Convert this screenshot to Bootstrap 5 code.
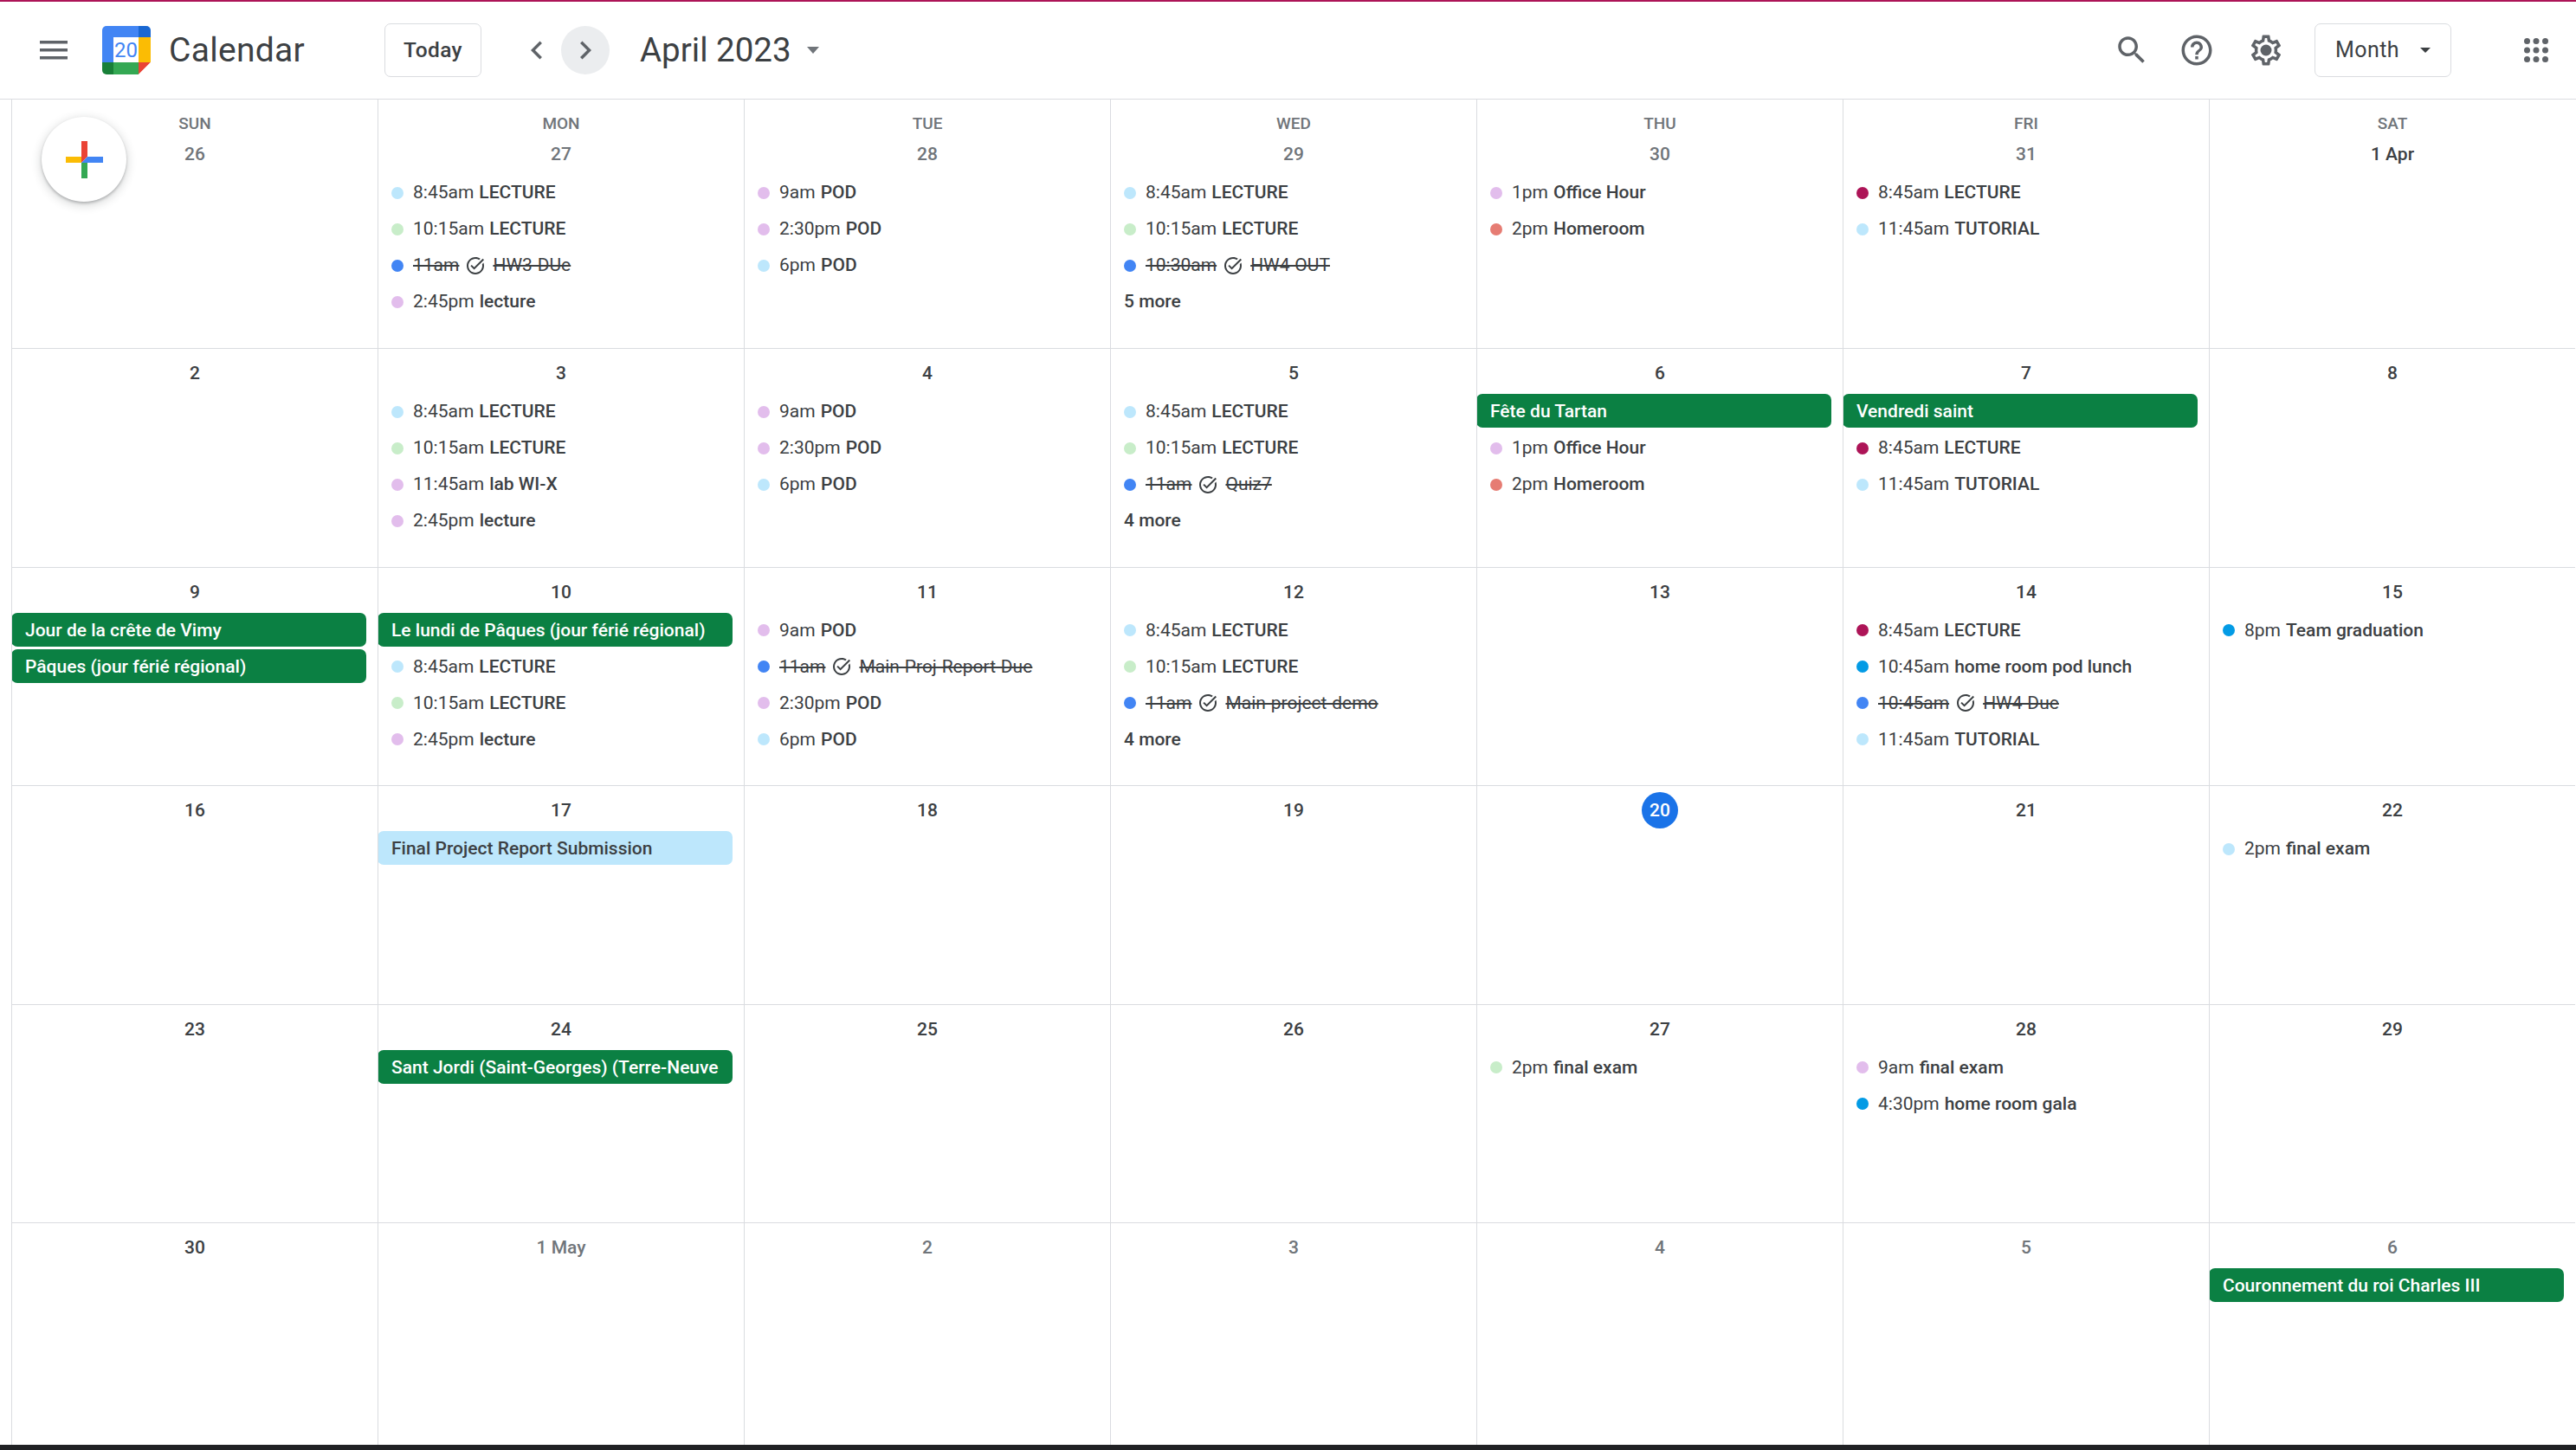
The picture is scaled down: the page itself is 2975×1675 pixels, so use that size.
<!DOCTYPE html>
<html lang="en">
<head>
  <meta charset="UTF-8">
  <meta name="viewport" content="width=device-width, initial-scale=1">
  <title>Calendar - April 2023</title>
  <link href="https://cdn.jsdelivr.net/npm/bootstrap@5.3.3/dist/css/bootstrap.min.css" rel="stylesheet">
  <style>
    html, body { height: 100%; overflow: hidden; }
    body { font-family: Roboto, "Liberation Sans", sans-serif; color: #3c4043; background: #fff; }

    .top-bar { height: 115px; border-top: 2px solid #ad1457; border-bottom: 1px solid #dadce0; padding-left: 46px; padding-right: 25px; }
    .top-bar svg { display: block; fill: #5f6368; }
    .menu-ico { margin-right: 40px; }
    .brand-logo { margin-right: 21px; }
    .brand-name { width: 249px; font-size: 39px; line-height: 1; letter-spacing: .3px; color: #3c4043; }
    .btn.outline-btn { height: 62px; border: 1px solid #dadce0; border-radius: 7px; font-size: 24.5px; font-weight: 500; letter-spacing: .4px; color: #3c4043; background: #fff; padding: 0; }
    .today-btn { width: 112px; margin-right: 36px; }
    .btn.outline-btn.month-btn { width: 158px; margin-left: 35px; gap: 24px; font-size: 25px; font-weight: 400; }
    .round-btn { width: 56px; height: 56px; border-radius: 50%; }
    .round-btn.is-hover { background: #ebedef; }
    .month-title { font-size: 38.5px; line-height: 1; margin-left: 35px; color: #3c4043; }
    .tri { display: inline-block; border-left: 7.5px solid transparent; border-right: 7.5px solid transparent; border-top: 8px solid #70757a; }
    .tri-title { margin-left: 18px; }
    .tri-month { border-left-width: 6px; border-right-width: 6px; border-top-width: 6px; border-top-color: #3c4043; }
    .gap-help { margin-left: 33px; }
    .gap-gear { margin-left: 38px; }
    .gap-apps { margin-left: 77px; }

    .month-wrap { height: 1554px; }
    .month-grid { display: grid; grid-template-columns: repeat(7, 423px); grid-template-rows: 288px repeat(4, 252.6px) 1fr; margin-left: 13px; height: 100%; }
    .day-cell { border-left: 1px solid #dadce0; border-bottom: 1px solid #dadce0; padding-top: 7px; overflow: hidden; min-width: 0; }
    .day-cell.first-week { padding-top: 16px; }
    .day-cell.last-week { border-bottom: 0; }
    .day-name { height: 26px; line-height: 24px; font-size: 19px; font-weight: 500; color: #70757a; text-align: center; }
    .day-num { height: 42px; margin-bottom: 4px; font-size: 21px; font-weight: 500; line-height: 42px; text-align: center; color: #3c4043; }
    .day-num.other { color: #70757a; }
    .day-num span { display: inline-block; min-width: 42px; height: 42px; border-radius: 50%; }
    .day-num.today span { background: #1a73e8; color: #fff; }

    .cal-item { height: 39px; margin-bottom: 3px; font-size: 21px; line-height: 39px; white-space: nowrap; }
    .cal-bar { margin-top: -1px; margin-bottom: 4px; margin-left: -1px; margin-right: 13px; padding-left: 16px; border-radius: 7px; font-weight: 500; line-height: 41px; background: #0b8043; color: #fff; overflow: hidden; }
    .cal-bar.pale { background: #bde7fc; color: #3c4043; }
    .cal-timed { padding-left: 15px; }
    .cal-dot { width: 14px; height: 14px; margin-right: 11px; border-radius: 50%; flex: none; }
    .cal-title { margin-left: 6px; font-weight: 500; }
    .is-done { text-decoration: line-through; text-decoration-thickness: 2px; }
    .cal-title.is-done { font-weight: 400; margin-left: 8px; }
    .cal-check { width: 24px; height: 24px; margin-left: 7px; fill: #3c4043; flex: none; }
    .cal-more { padding-left: 15px; font-weight: 500; }

    .sky { background: #bde7fc; }
    .mint { background: #c8edc9; }
    .pinkish { background: #e2bdec; }
    .blue { background: #4285f4; }
    .salmon { background: #e67c73; }
    .crimson { background: #ad1457; }
    .peacock { background: #039be5; }

    .add-fab { position: absolute; left: 48px; top: 135px; width: 98px; height: 98px; border: 0; border-radius: 50%; background: #fff; box-shadow: 0 2px 3px rgba(60,64,67,.3), 0 3px 10px 3px rgba(60,64,67,.15); }
    .bottom-strip { height: 6px; background: #202124; }
  </style>
</head>
<body class="position-relative">

  <header class="top-bar d-flex align-items-center">
    <svg class="menu-ico" width="32" height="22" viewBox="0 0 32 22"><path d="M0 0h32v3.5H0zM0 9h32v3.5H0zM0 18h32v3.5H0z"/></svg>
    <svg class="brand-logo" width="56" height="56" viewBox="0 0 56 56">
      <defs><clipPath id="logoClip"><path d="M5 0h46a5 5 0 0 1 5 5v37L42 56H5a5 5 0 0 1-5-5V5a5 5 0 0 1 5-5z"/></clipPath></defs>
      <g clip-path="url(#logoClip)">
        <rect width="56" height="56" fill="#fff"/>
        <path d="M0 0h42v13H13v29H0z" fill="#4285f4"/>
        <rect x="42" width="14" height="13" fill="#1967d2"/>
        <rect x="42" y="13" width="14" height="29" fill="#fbbc04"/>
        <rect x="13" y="42" width="29" height="14" fill="#34a853"/>
        <rect y="42" width="13" height="14" fill="#188038"/>
        <path d="M42 42h14L42 56z" fill="#ea4335"/>
      </g>
      <text x="27.5" y="36" text-anchor="middle" font-family="Roboto, sans-serif" font-size="24" fill="#4285f4">20</text>
    </svg>
    <span class="brand-name">Calendar</span>
    <button class="btn outline-btn today-btn" type="button">Today</button>
    <span class="round-btn d-flex align-items-center justify-content-center">
      <svg width="42" height="42" viewBox="0 0 24 24"><path d="M15.41 7.41L14 6l-6 6 6 6 1.41-1.41L10.83 12z"/></svg>
    </span>
    <span class="round-btn is-hover d-flex align-items-center justify-content-center">
      <svg width="42" height="42" viewBox="0 0 24 24"><path d="M10 6L8.59 7.41 13.17 12l-4.58 4.59L10 18l6-6z"/></svg>
    </span>
    <span class="month-title">April 2023</span>
    <span class="tri tri-title"></span>

    <svg class="ms-auto" width="42" height="42" viewBox="0 0 24 24"><path d="M15.5 14h-.79l-.28-.27C15.41 12.59 16 11.11 16 9.5 16 5.91 13.09 3 9.5 3S3 5.91 3 9.5 5.91 16 9.5 16c1.61 0 3.09-.59 4.23-1.57l.27.28v.79l5 4.99L20.49 19l-4.99-5zm-6 0C7.01 14 5 11.99 5 9.5S7.01 5 9.5 5 14 7.01 14 9.5 11.99 14 9.5 14z"/></svg>
    <svg class="gap-help" width="42" height="42" viewBox="0 0 24 24"><path d="M11 18h2v-2h-2v2zm1-16C6.48 2 2 6.48 2 12s4.48 10 10 10 10-4.48 10-10S17.52 2 12 2zm0 18c-4.41 0-8-3.59-8-8s3.59-8 8-8 8 3.59 8 8-3.59 8-8 8zm0-14c-2.21 0-4 1.79-4 4h2c0-1.1.9-2 2-2s2 .9 2 2c0 2-3 1.75-3 5h2c0-2.25 3-2.5 3-5 0-2.21-1.79-4-4-4z"/></svg>
    <svg class="gap-gear" width="42" height="42" viewBox="0 0 24 24"><path d="M19.43 12.98c.04-.32.07-.64.07-.98 0-.34-.03-.66-.07-.98l2.11-1.65c.19-.15.24-.42.12-.64l-2-3.46c-.09-.16-.26-.25-.44-.25-.06 0-.12.01-.17.03l-2.49 1c-.52-.4-1.08-.73-1.69-.98l-.38-2.65C14.46 2.18 14.25 2 14 2h-4c-.25 0-.46.18-.49.42l-.38 2.65c-.61.25-1.17.59-1.69.98l-2.49-1c-.06-.02-.12-.03-.18-.03-.17 0-.34.09-.43.25l-2 3.46c-.13.22-.07.49.12.64l2.11 1.65c-.04.32-.07.65-.07.98 0 .33.03.66.07.98l-2.11 1.65c-.19.15-.24.42-.12.64l2 3.46c.09.16.26.25.44.25.06 0 .12-.01.17-.03l2.49-1c.52.4 1.08.73 1.69.98l.38 2.65c.03.24.24.42.49.42h4c.25 0 .46-.18.49-.42l.38-2.65c.61-.25 1.17-.59 1.69-.98l2.49 1c.06.02.12.03.18.03.17 0 .34-.09.43-.25l2-3.46c.12-.22.07-.49-.12-.64l-2.11-1.65zm-1.98-1.71c.04.31.05.52.05.73 0 .21-.02.43-.05.73l-.14 1.13.89.7 1.08.84-.7 1.21-1.27-.51-1.04-.42-.9.68c-.43.32-.84.56-1.25.73l-1.06.43-.16 1.13-.2 1.35h-1.4l-.19-1.35-.16-1.13-1.06-.43c-.43-.18-.83-.41-1.23-.71l-.91-.7-1.06.43-1.27.51-.7-1.21 1.08-.84.89-.7-.14-1.13c-.03-.31-.05-.54-.05-.74s.02-.43.05-.73l.14-1.13-.89-.7-1.08-.84.7-1.21 1.27.51 1.04.42.9-.68c.43-.32.84-.56 1.25-.73l1.06-.43.16-1.13.2-1.35h1.39l.19 1.35.16 1.13 1.06.43c.43.18.83.41 1.23.71l.91.7 1.06-.43 1.27-.51.7 1.21-1.07.85-.89.7.14 1.13z"/><circle cx="12" cy="12" r="3.7"/></svg>
    <button class="btn outline-btn month-btn d-flex align-items-center justify-content-center" type="button">Month <span class="tri tri-month"></span></button>
    <svg class="gap-apps" width="42" height="42" viewBox="0 0 24 24"><circle cx="6" cy="6" r="2"/><circle cx="12" cy="6" r="2"/><circle cx="18" cy="6" r="2"/><circle cx="6" cy="12" r="2"/><circle cx="12" cy="12" r="2"/><circle cx="18" cy="12" r="2"/><circle cx="6" cy="18" r="2"/><circle cx="12" cy="18" r="2"/><circle cx="18" cy="18" r="2"/></svg>
  </header>

  <main class="month-wrap">
    <div class="month-grid" id="monthGrid"></div>
  </main>
  <div class="bottom-strip"></div>

  <button class="add-fab d-flex align-items-center justify-content-center" type="button" aria-label="Create">
    <svg width="43" height="43" viewBox="0 0 43 43">
      <path d="M18 0h7v18l-7 7z" fill="#ea4335"/>
      <path d="M25 18h18v7H18z" fill="#4285f4"/>
      <path d="M18 25h7v18h-7z" fill="#34a853"/>
      <path d="M0 18h18v7H0z" fill="#fbbc04"/>
    </svg>
  </button>

<script>
  const dayNames = ['SUN', 'MON', 'TUE', 'WED', 'THU', 'FRI', 'SAT'];

  // shorthand for the recurring events
  const ev = (t, n, c) => ({ t, n, c });
  const done = (t, n) => ({ t, n, c: 'blue', done: true });
  const bar = (n, pale) => ({ bar: n, pale });
  const more = n => ({ more: n + ' more' });
  const lec1 = ev('8:45am', 'LECTURE', 'sky');
  const lec2 = ev('10:15am', 'LECTURE', 'mint');
  const lec3 = ev('2:45pm', 'lecture', 'pinkish');
  const pods = [ev('9am', 'POD', 'pinkish'), ev('2:30pm', 'POD', 'pinkish'), ev('6pm', 'POD', 'sky')];
  const hours = [ev('1pm', 'Office Hour', 'pinkish'), ev('2pm', 'Homeroom', 'salmon')];
  const friLec = ev('8:45am', 'LECTURE', 'crimson');
  const tut = ev('11:45am', 'TUTORIAL', 'sky');

  const weeks = [
    [
      { d: '26', other: true, items: [] },
      { d: '27', other: true, items: [lec1, lec2, done('11am', 'HW3-DUe'), lec3] },
      { d: '28', other: true, items: pods },
      { d: '29', other: true, items: [lec1, lec2, done('10:30am', 'HW4-OUT'), more(5)] },
      { d: '30', other: true, items: hours },
      { d: '31', other: true, items: [friLec, tut] },
      { d: '1 Apr', items: [] }
    ],
    [
      { d: '2', items: [] },
      { d: '3', items: [lec1, lec2, ev('11:45am', 'lab WI-X', 'pinkish'), lec3] },
      { d: '4', items: pods },
      { d: '5', items: [lec1, lec2, done('11am', 'Quiz7'), more(4)] },
      { d: '6', items: [bar('Fête du Tartan'), ...hours] },
      { d: '7', items: [bar('Vendredi saint'), friLec, tut] },
      { d: '8', items: [] }
    ],
    [
      { d: '9', items: [bar('Jour de la crête de Vimy'), bar('Pâques (jour férié régional)')] },
      { d: '10', items: [bar('Le lundi de Pâques (jour férié régional)'), lec1, lec2, lec3] },
      { d: '11', items: [pods[0], done('11am', 'Main-Proj-Report-Due'), pods[1], pods[2]] },
      { d: '12', items: [lec1, lec2, done('11am', 'Main-project-demo'), more(4)] },
      { d: '13', items: [] },
      { d: '14', items: [friLec, ev('10:45am', 'home room pod lunch', 'peacock'), done('10:45am', 'HW4-Due'), tut] },
      { d: '15', items: [ev('8pm', 'Team graduation', 'peacock')] }
    ],
    [
      { d: '16', items: [] },
      { d: '17', items: [bar('Final Project Report Submission', true)] },
      { d: '18', items: [] },
      { d: '19', items: [] },
      { d: '20', today: true, items: [] },
      { d: '21', items: [] },
      { d: '22', items: [ev('2pm', 'final exam', 'sky')] }
    ],
    [
      { d: '23', items: [] },
      { d: '24', items: [bar('Sant Jordi (Saint-Georges) (Terre-Neuve')] },
      { d: '25', items: [] },
      { d: '26', items: [] },
      { d: '27', items: [ev('2pm', 'final exam', 'mint')] },
      { d: '28', items: [ev('9am', 'final exam', 'pinkish'), ev('4:30pm', 'home room gala', 'peacock')] },
      { d: '29', items: [] }
    ],
    [
      { d: '30', items: [] },
      { d: '1 May', other: true, items: [] },
      { d: '2', other: true, items: [] },
      { d: '3', other: true, items: [] },
      { d: '4', other: true, items: [] },
      { d: '5', other: true, items: [] },
      { d: '6', other: true, items: [bar('Couronnement du roi Charles III')] }
    ]
  ];

  const checkIcon = `<svg class="cal-check" viewBox="0 0 24 24"><path d="M22 5.18L10.59 16.6l-4.24-4.24 1.41-1.41 2.83 2.83 10-10L22 5.18zM19.79 10.22c.13.57.21 1.17.21 1.78 0 4.42-3.58 8-8 8s-8-3.58-8-8 3.58-8 8-8c1.58 0 3.04.46 4.28 1.25l1.44-1.44C16.1 2.67 14.13 2 12 2 6.48 2 2 6.48 2 12s4.48 10 10 10 10-4.48 10-10c0-1.19-.22-2.33-.6-3.39l-1.61 1.61z"/></svg>`;

  function renderItem(it) {
    if (it.bar) return `<div class="cal-item cal-bar ${it.pale ? 'pale' : ''}">${it.bar}</div>`;
    if (it.more) return `<div class="cal-item cal-more">${it.more}</div>`;
    if (it.done) {
      return `<div class="cal-item cal-timed d-flex align-items-center"><span class="cal-dot ${it.c}"></span><span class="is-done">${it.t}</span>${checkIcon}<span class="cal-title is-done">${it.n}</span></div>`;
    }
    return `<div class="cal-item cal-timed d-flex align-items-center"><span class="cal-dot ${it.c}"></span><span>${it.t}</span><span class="cal-title">${it.n}</span></div>`;
  }

  const grid = document.getElementById('monthGrid');
  weeks.forEach((week, w) => {
    week.forEach((day, i) => {
      const cls = ['day-cell'];
      if (w === 0) cls.push('first-week');
      if (w === weeks.length - 1) cls.push('last-week');
      const numCls = ['day-num'];
      if (day.other) numCls.push('other');
      if (day.today) numCls.push('today');
      grid.innerHTML += `
        <div class="${cls.join(' ')}">
          ${w === 0 ? `<div class="day-name">${dayNames[i]}</div>` : ''}
          <div class="${numCls.join(' ')}"><span>${day.d}</span></div>
          ${day.items.map(renderItem).join('')}
        </div>`;
    });
  });
</script>

<script src="https://cdn.jsdelivr.net/npm/bootstrap@5.3.3/dist/js/bootstrap.bundle.min.js"></script>
</body>
</html>
